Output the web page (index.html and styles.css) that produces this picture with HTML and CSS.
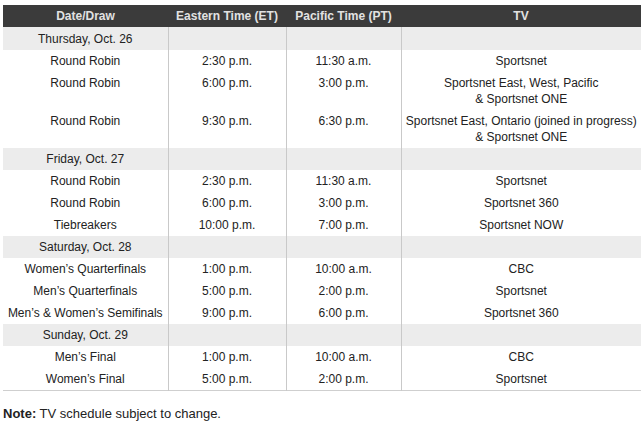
FILE: index.html
```html
<!DOCTYPE html>
<html>
<head>
<meta charset="utf-8">
<link rel="stylesheet" href="styles.css">
</head>
<body>
<table class="schedule">
  <colgroup>
    <col class="c1"><col class="c2"><col class="c3"><col class="c4">
  </colgroup>
  <thead>
    <tr><th>Date/Draw</th><th>Eastern Time (ET)</th><th>Pacific Time (PT)</th><th>TV</th></tr>
  </thead>
  <tbody>
    <tr class="day first"><td>Thursday, Oct. 26</td><td></td><td></td><td></td></tr>
    <tr><td>Round Robin</td><td>2:30 p.m.</td><td>11:30 a.m.</td><td>Sportsnet</td></tr>
    <tr class="top"><td>Round Robin</td><td>6:00 p.m.</td><td>3:00 p.m.</td><td>Sportsnet East, West, Pacific<br>&amp; Sportsnet ONE</td></tr>
    <tr class="top"><td>Round Robin</td><td>9:30 p.m.</td><td>6:30 p.m.</td><td>Sportsnet East, Ontario (joined in progress)<br>&amp; Sportsnet ONE</td></tr>
    <tr class="day"><td>Friday, Oct. 27</td><td></td><td></td><td></td></tr>
    <tr><td>Round Robin</td><td>2:30 p.m.</td><td>11:30 a.m.</td><td>Sportsnet</td></tr>
    <tr><td>Round Robin</td><td>6:00 p.m.</td><td>3:00 p.m.</td><td>Sportsnet 360</td></tr>
    <tr><td>Tiebreakers</td><td>10:00 p.m.</td><td>7:00 p.m.</td><td>Sportsnet NOW</td></tr>
    <tr class="day"><td>Saturday, Oct. 28</td><td></td><td></td><td></td></tr>
    <tr><td>Women’s Quarterfinals</td><td>1:00 p.m.</td><td>10:00 a.m.</td><td>CBC</td></tr>
    <tr><td>Men’s Quarterfinals</td><td>5:00 p.m.</td><td>2:00 p.m.</td><td>Sportsnet</td></tr>
    <tr><td>Men’s &amp; Women’s Semifinals</td><td>9:00 p.m.</td><td>6:00 p.m.</td><td>Sportsnet 360</td></tr>
    <tr class="day"><td>Sunday, Oct. 29</td><td></td><td></td><td></td></tr>
    <tr><td>Men’s Final</td><td>1:00 p.m.</td><td>10:00 a.m.</td><td>CBC</td></tr>
    <tr><td>Women’s Final</td><td>5:00 p.m.</td><td>2:00 p.m.</td><td>Sportsnet</td></tr>
  </tbody>
</table>
<p class="note"><strong>Note:</strong> TV schedule subject to change.</p>
</body>
</html>
```

FILE: styles.css
```css
body {
  margin: 5px 3px;
  font-family: "Liberation Sans", Arial, sans-serif;
  font-size: 12px;
  color: #222;
  background: #fff;
}
.schedule {
  width: 638px;
  border-collapse: collapse;
  table-layout: fixed;
  border-bottom: 1px solid #cfcfcf;
}
.c1 { width: 165px; }
.c2 { width: 118px; }
.c3 { width: 115px; }
.c4 { width: 240px; }
.schedule th {
  background: #3b3b3b;
  color: #e2e2e2;
  font-weight: bold;
  height: 22px;
  padding: 0;
  line-height: 16px;
  text-align: center;
}
.schedule td {
  padding: 3px 0;
  line-height: 16px;
  height: 16px;
  text-align: center;
  vertical-align: top;
  border-left: 1px solid #c9c9c9;
}
.schedule td:first-child {
  border-left: none;
}
.schedule tr.day td {
  background: #ececec;
}
.schedule tr.first td {
  padding-top: 4px;
}
.note {
  margin: 14px 0 0;
  font-size: 13px;
  line-height: 17px;
}
.note strong {
  font-weight: bold;
}
```
